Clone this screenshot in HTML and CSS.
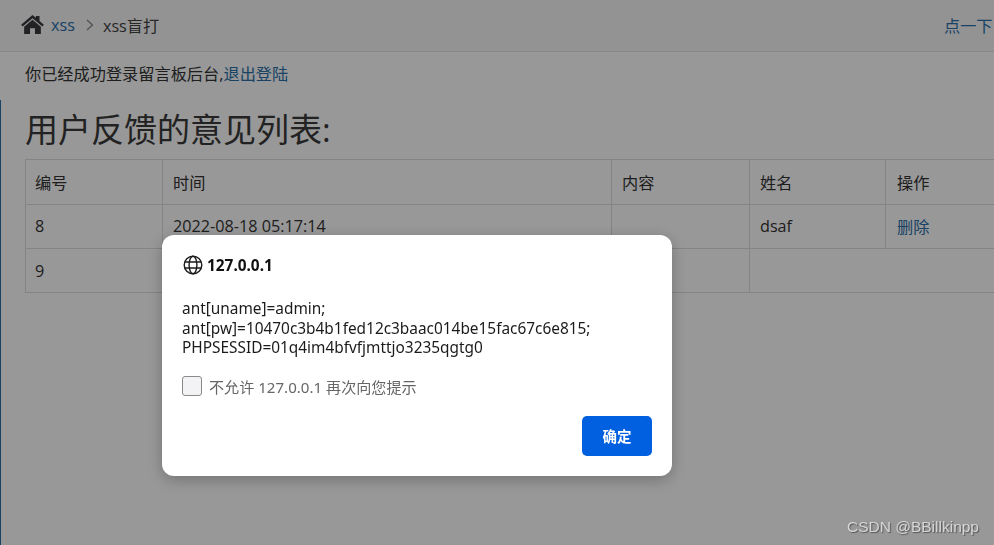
FILE: index.html
```html
<!DOCTYPE html>
<html lang="zh">
<head>
<meta charset="utf-8">
<title>xss盲打</title>
<link rel="stylesheet" href="styles.css">
</head>
<body>
<div class="page">
  <header class="topbar">
    <nav class="crumbs">
      <svg class="home" viewBox="0 0 24 20" width="23" height="19"><path fill="#3a3a3d" d="M12 0 15.6 3V1H19.4V6.2L24 10.2 22.4 12.2 12 3.3 1.6 12.2 0 10.2Z"/><path fill="#3a3a3d" d="M12 5 20.8 12.4V20H14.6V14H9.4V20H3.2V12.4Z"/></svg>
      <a class="link crumb-link">xss</a>
      <svg class="chev" viewBox="0 0 8 12" width="8" height="12"><path d="M1 1 6.5 6 1 11" fill="none" stroke="#8a8a8d" stroke-width="1.3"/></svg>
      <span class="crumb-cur">xss盲打</span>
    </nav>
    <a class="link hint">点一下</a>
  </header>
  <main class="content">
    <p class="login">你已经成功登录留言板后台,<a class="link">退出登陆</a></p>
    <h1 class="title">用户反馈的意见列表:</h1>
    <table class="grid">
      <colgroup><col class="c1"><col class="c2"><col class="c3"><col class="c4"><col class="c5"></colgroup>
      <tr class="r1"><td>编号</td><td>时间</td><td>内容</td><td>姓名</td><td>操作</td></tr>
      <tr class="r2"><td>8</td><td>2022-08-18 05:17:14</td><td></td><td>dsaf</td><td><a class="link del">删除</a></td></tr>
      <tr class="r3"><td>9</td><td></td><td></td><td colspan="2"></td></tr>
    </table>
  </main>
</div>
<div class="overlay"></div>
<section class="dialog">
  <div class="dlg-head">
    <svg class="globe" viewBox="0 0 20 20" width="20" height="20"><g fill="none" stroke="#1b1b1b" stroke-width="1.4"><circle cx="10" cy="10" r="8.8"/><ellipse cx="10" cy="10" rx="3.9" ry="8.8"/><path d="M1.8 7H18.2M1.8 13H18.2"/></g></svg>
    <strong class="host">127.0.0.1</strong>
  </div>
  <p class="msg">ant[uname]=admin;<br>ant[pw]=10470c3b4b1fed12c3baac014be15fac67c6e815;<br>PHPSESSID=01q4im4bfvfjmttjo3235qgtg0</p>
  <label class="check"><span class="box"></span><span>不允许 127.0.0.1 再次向您提示</span></label>
  <div class="actions"><button class="ok">确定</button></div>
</section>
<div class="mark">CSDN @BBillkinpp</div>
</body>
</html>
```

FILE: styles.css
```css
html, body {
  margin: 0;
  height: 100%;
  overflow: hidden;
  background: #fff;
}
body {
  font-family: "Open Sans", "Noto Sans CJK SC", sans-serif;
  font-size: 16.2px;
  color: #333;
}
.page {
  height: 545px;
  overflow: hidden;
}
.link { color: #2a6fa8; }
.topbar {
  height: 51px;
  border-bottom: 1px solid #e4e4e6;
  background: #f6f6f8;
  display: flex;
  justify-content: space-between;
  align-items: center;
  padding-left: 21px;
  margin-right: -20px;
}
.crumbs {
  display: flex;
  align-items: center;
  height: 49px;
  margin-bottom: 2px;
}
.home { margin-top: -1px; }
.crumb-link { margin-left: 7px; }
.chev { margin-left: 11px; }
.crumb-cur { margin-left: 9px; color: #444; }
.hint {
  margin: 0 1px 2px 0;
  white-space: nowrap;
  width: 69px;
}
.content {
  background: #fff;
  padding-left: 25px;
  position: relative;
}
.content::before {
  content: "";
  position: absolute;
  left: 0;
  top: 48px;
  height: 446px;
  width: 1px;
  background: #2a6fa8;
}
.login {
  margin: 0;
  padding-top: 11px;
  height: 35px;
  line-height: 23px;
  box-sizing: border-box;
}
.title {
  margin: 0;
  padding-top: 20px;
  height: 72px;
  box-sizing: border-box;
  font-size: 33px;
  font-weight: 400;
  line-height: 45px;
  color: #3a3a3a;
}
.grid {
  border-collapse: collapse;
  table-layout: fixed;
  width: 1000px;
}
.c1 { width: 137px; }
.c2 { width: 449px; }
.c3 { width: 138px; }
.c4 { width: 136px; }
.c5 { width: 140px; }
.grid td {
  border: 1px solid #ddd;
  padding: 0 10px;
  white-space: nowrap;
  vertical-align: middle;
}
.grid td:first-child { padding-left: 9px; }
.grid td:last-child { padding-left: 11px; }
.r1 { height: 45px; }
.r2 { height: 44px; }
.r3 { height: 44px; }
.r2 td { padding-bottom: 2px; }
.overlay {
  position: fixed;
  inset: 0;
  background: rgba(0, 0, 0, 0.405);
}
.dialog {
  position: fixed;
  left: 162px;
  top: 235px;
  width: 510px;
  height: 241px;
  box-sizing: border-box;
  padding: 20px;
  background: #fff;
  border-radius: 12px;
  box-shadow: 0 4px 16px rgba(0, 0, 0, 0.25);
  font-family: "Noto Sans", "Noto Sans CJK SC", sans-serif;
  font-size: 15.4px;
  color: #1b1b1b;
}
.dlg-head {
  display: flex;
  align-items: center;
  gap: 4px;
  height: 20px;
  margin-left: 1px;
}
.host { font-size: 15.4px; font-weight: 700; color: #111; }
.msg {
  margin: 24px 0 0;
  line-height: 19.5px;
}
.check {
  display: flex;
  align-items: center;
  gap: 7px;
  margin-top: 18px;
  color: #666;
  font-size: 15.1px;
  height: 20px;
}
.box {
  width: 18px;
  height: 18px;
  border: 1px solid #8a8a8a;
  border-radius: 3px;
  background: #f3f3f5;
}
.actions {
  display: flex;
  justify-content: flex-end;
  margin-top: 20px;
}
.ok {
  width: 70px;
  height: 40px;
  border: 0;
  border-radius: 5px;
  background: #0060df;
  color: #fff;
  font: 700 14.5px "Noto Sans CJK SC", sans-serif;
}
.mark {
  position: fixed;
  right: 15px;
  bottom: 9px;
  font: 15.5px "Liberation Sans", sans-serif;
  color: #d6d6d6;
  text-shadow: 1px 1px 1px #555;
}
```
